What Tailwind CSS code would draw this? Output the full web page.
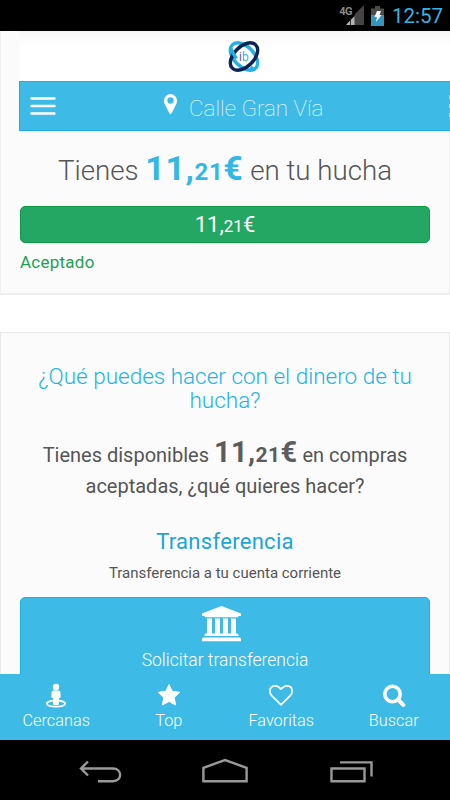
<!DOCTYPE html>
<html lang="es">
    <head>
        <meta charset="utf-8">
        <title>Mi hucha</title>
        <script src="https://cdn.jsdelivr.net/npm/@tailwindcss/browser@4"></script>
    </head>
    <body class="flex flex-col w-[450px] h-[800px] overflow-hidden bg-white font-[Roboto,sans-serif] text-[#555]">

        <!-- status bar -->
        <div class="flex items-center justify-end h-[31px] shrink-0 bg-black pr-[7px]">
            <span class="flex mr-[7px]">
                <span class="text-[11px] leading-[13px] font-bold text-[#8a8a8a] tracking-[-0.5px]">4G</span>
                <svg class="w-[18px] h-[21px] ml-[-6px]" viewBox="0 0 18 21">
                    <path d="M8.500 9.500L18 0V20H0L6 13.500H8.500Z" fill="#444"/>
                    <path d="M0 20L8.500 11V20Z" fill="#b4b4b4"/>
                    <path d="M4.500 13.500V20" stroke="#333" stroke-width="1"/>
                </svg>
            </span>
            <svg class="w-[13px] h-[20px] mr-[8px]" viewBox="0 0 13 20">
                <path d="M0 2.500H4V0H9V2.500H13V20H0Z" fill="#4a4a4a"/>
                <path d="M0 9H13V20H0Z" fill="#3496bd"/>
                <path d="M6 5H10L8.500 9H10.500L5 16L6 11H3.500Z" fill="#fff"/>
            </svg>
            <span class="text-[20.5px] leading-[31px] pt-[2px] text-[#33b5e5]">12:57</span>
        </div>

        <!-- top card with the app header -->
        <div class="h-[264px] shrink-0 bg-[#fbfbfb] border-x border-b-2 border-[#eee]">
            <div class="h-[50px] w-[431px] ml-[18px] pr-[1px] pt-[8px] pl-[208px] bg-linear-to-b from-[#f5f5f5] via-white via-30% to-white">
                <svg class="w-[34px] h-[34px]" viewBox="0 0 34 34">
                    <g fill="none" stroke-width="3.400">
                        <ellipse cx="17" cy="17.500" rx="16.500" ry="10" transform="rotate(45 17 17.500)" stroke="#25b1df"/>
                        <ellipse cx="17" cy="17.500" rx="16.500" ry="10" transform="rotate(-45 17 17.500)" stroke="#0c2357"/>
                        <path d="M3.900 9.500Q5.500 14 9.500 19.500M23.500 28Q26 30.200 28.500 30.400" stroke="#25b1df"/>
                    </g>
                    <text x="12" y="21.500" font-family="Roboto" font-size="12" font-weight="400" fill="#53608a">i<tspan fill="#35b3df">b</tspan></text>
                </svg>
            </div>
            <div class="flex items-center h-[50px] w-[431px] ml-[18px] bg-[#3dbae6] border-y border-l border-[#1cb0e2] text-white">
                <svg class="w-[26px] h-[20px] ml-[10px] shrink-0" viewBox="0 0 26 20">
                    <path d="M1.500 2.500H24.500M1.500 10H24.500M1.500 17.500H24.500" stroke="#fff" stroke-width="2.400" stroke-linecap="round"/>
                </svg>
                <svg class="w-[13px] h-[20px] ml-[108px] mb-[4px] shrink-0" viewBox="0 0 13 20">
                    <path fill="#fff" fill-rule="evenodd" d="M6.500 0A6.500 6.500 0 0 0 0 6.500C0 8.500 .5 9.600 1 10.600L5.300 19.200Q6.500 20.800 7.700 19.200L12 10.600C12.500 9.600 13 8.500 13 6.500A6.500 6.500 0 0 0 6.500 0ZM6.500 3.300A3.200 3.200 0 1 1 6.500 9.700A3.200 3.200 0 0 1 6.500 3.300Z"/>
                </svg>
                <span class="ml-[12px] pt-[5px] font-thin text-[22.5px] whitespace-nowrap">Calle Gran Vía</span>
                <span class="flex flex-col gap-[5px] ml-auto">
                    <i class="w-px h-[4px] bg-[#a5dff4]"></i>
                    <i class="w-px h-[4px] bg-[#a5dff4]"></i>
                    <i class="w-px h-[4px] bg-[#a5dff4]"></i>
                </span>
            </div>
            <h2 class="h-[75px] leading-[74px] text-center text-[27.7px] font-light whitespace-nowrap">Tienes <b class="font-bold text-[34px] tracking-[0.6px] text-[#33b8e6]">11,<span class="text-[24px]">21</span>€</b> en tu hucha</h2>
            <div class="h-[37px] leading-[35px] mx-[19px] rounded-[5px] bg-[#23a762] border border-[#0c9a48] text-center text-[22px] text-white">11,<span class="text-[17px]">21</span>€</div>
            <p class="ml-[19px] mt-[9px] text-[17px] leading-[20px] tracking-[0.25px] text-[#1da053]">Aceptado</p>
        </div>

        <!-- transfer card, cut by the tab bar -->
        <div class="h-[342px] mt-[37px] shrink-0 overflow-hidden bg-[#fbfbfb] border-x border-t border-[#e8e8e8] text-center">
            <h3 class="mt-[32px] text-[22.5px] leading-[23.5px] font-light text-[#1bb4e5] whitespace-nowrap">¿Qué puedes hacer con el dinero de tu<br>hucha?</h3>
            <p class="mt-[25px] text-[20px] leading-[31px] whitespace-nowrap">Tienes disponibles <b class="text-[29px] tracking-[0.4px] text-[#5c5c5c]">11,<span class="text-[21px]">21</span>€</b> en compras<br>aceptadas, ¿qué quieres hacer?</p>
            <h4 class="mt-[26px] text-[22px] leading-[28px] tracking-[0.3px] text-[#1ba5d6]">Transferencia</h4>
            <p class="mt-[7px] text-[15px] leading-[20px]">Transferencia a tu cuenta corriente</p>
            <div class="h-[90px] mx-[19px] mt-[14px] pt-[8px] flex flex-col items-center rounded-[5px] bg-[#3dbae6] border border-[#1cb0e2] text-white">
                <svg class="w-[39px] h-[36px] mr-[8px]" viewBox="0 0 39 36">
                    <path fill="#fff" d="M19.500 0L39 7.500V10H36.500Q36.500 11.300 35 11.300H4Q2.500 11.300 2.500 10H0V7.500ZM5 12.500H10V27.500H13V12.500H18V27.500H21V12.500H26V27.500H29V12.500H34V27.500H35Q36.500 27.500 36.500 29V30H2.500V29Q2.500 27.500 4 27.500H5ZM1.500 31.500H37.500Q39 31.500 39 33V35.200H0V33Q0 31.500 1.500 31.500Z"/>
                </svg>
                <span class="mt-[8px] text-[17.5px] leading-[20px] font-light">Solicitar transferencia</span>
            </div>
        </div>

        <!-- tab bar -->
        <div class="grid grid-cols-4 h-[66px] shrink-0 bg-[#3dbae6] text-white text-[16.3px] leading-[20px] font-light">
            <div class="flex flex-col items-center pt-[9px]">
                <svg class="w-[20px] h-[25px] mb-[3px]" viewBox="0 0 20 25">
                    <circle cx="10" cy="4" r="3.200" fill="#fff"/>
                    <path fill="#fff" d="M7.500 7.500H12.500Q14.500 7.500 14.500 9.500V15H13V21Q13 22 12 22H8Q7 22 7 21V15H5.500V9.500Q5.500 7.500 7.500 7.500Z"/>
                    <path fill="none" stroke="#fff" stroke-width="1.800" d="M7 17.600C-2 18.700-1 23.600 10 23.600S22 18.700 13 17.600"/>
                </svg>
                <span>Cercanas</span>
            </div>
            <div class="flex flex-col items-center pt-[9px]">
                <svg class="w-[24px] h-[25px] mb-[3px]" viewBox="0 0 24 25">
                    <path fill="#fff" stroke="#fff" stroke-width="1" stroke-linejoin="round" d="M12 1.500L15.200 8.300L22.700 9.300L17.200 14.500L18.600 22L12 18.400L5.400 22L6.800 14.500L1.300 9.300L8.800 8.300Z"/>
                </svg>
                <span>Top</span>
            </div>
            <div class="flex flex-col items-center pt-[9px]">
                <svg class="w-[26px] h-[25px] mb-[3px]" viewBox="0 0 26 25">
                    <path fill="none" stroke="#fff" stroke-width="1.700" stroke-linejoin="round" d="M13 21.800L3.700 12.700C1.800 10.700 1.900 8.900 1.900 8.100C1.900 5 3.900 2.900 7.300 2.900C10.300 2.900 12 5 13 6.200C14 5 15.700 2.900 18.700 2.900C22.100 2.900 24.100 5 24.100 8.100C24.100 8.900 24.200 10.700 22.300 12.700Z"/>
                </svg>
                <span>Favoritas</span>
            </div>
            <div class="flex flex-col items-center pt-[9px]">
                <svg class="w-[24px] h-[25px] mb-[3px]" viewBox="0 0 24 25">
                    <circle cx="10.500" cy="11" r="7.700" fill="none" stroke="#fff" stroke-width="3.600"/>
                    <path d="M16 16.500L21.300 21.800" stroke="#fff" stroke-width="4" stroke-linecap="round"/>
                </svg>
                <span>Buscar</span>
            </div>
        </div>

        <!-- system navigation -->
        <div class="flex items-start h-[60px] shrink-0 bg-black pt-[18px] pl-[79px]">
            <svg class="w-[43px] h-[26px]" viewBox="0 0 43 26" fill="none" stroke="#999" stroke-width="2.400">
                <path d="M9 3.500L2 10.500L9 17.500M2 10.500H34C43.500 10.500 43.500 23.200 34 23.200H19"/>
            </svg>
            <svg class="w-[48px] h-[26px] ml-[79px]" viewBox="0 0 48 26" fill="none" stroke="#999" stroke-width="2.400">
                <path d="M2.400 23.200V9.800L24 2L45.600 9.800V23.200Z"/>
            </svg>
            <svg class="w-[44px] h-[26px] ml-[81px]" viewBox="0 0 44 26" fill="none" stroke="#999" stroke-width="2.400">
                <path d="M1.500 10.500H34.500V23.300H1.500ZM10 4.400H41.500V18.500"/>
            </svg>
        </div>
    </body>
</html>
